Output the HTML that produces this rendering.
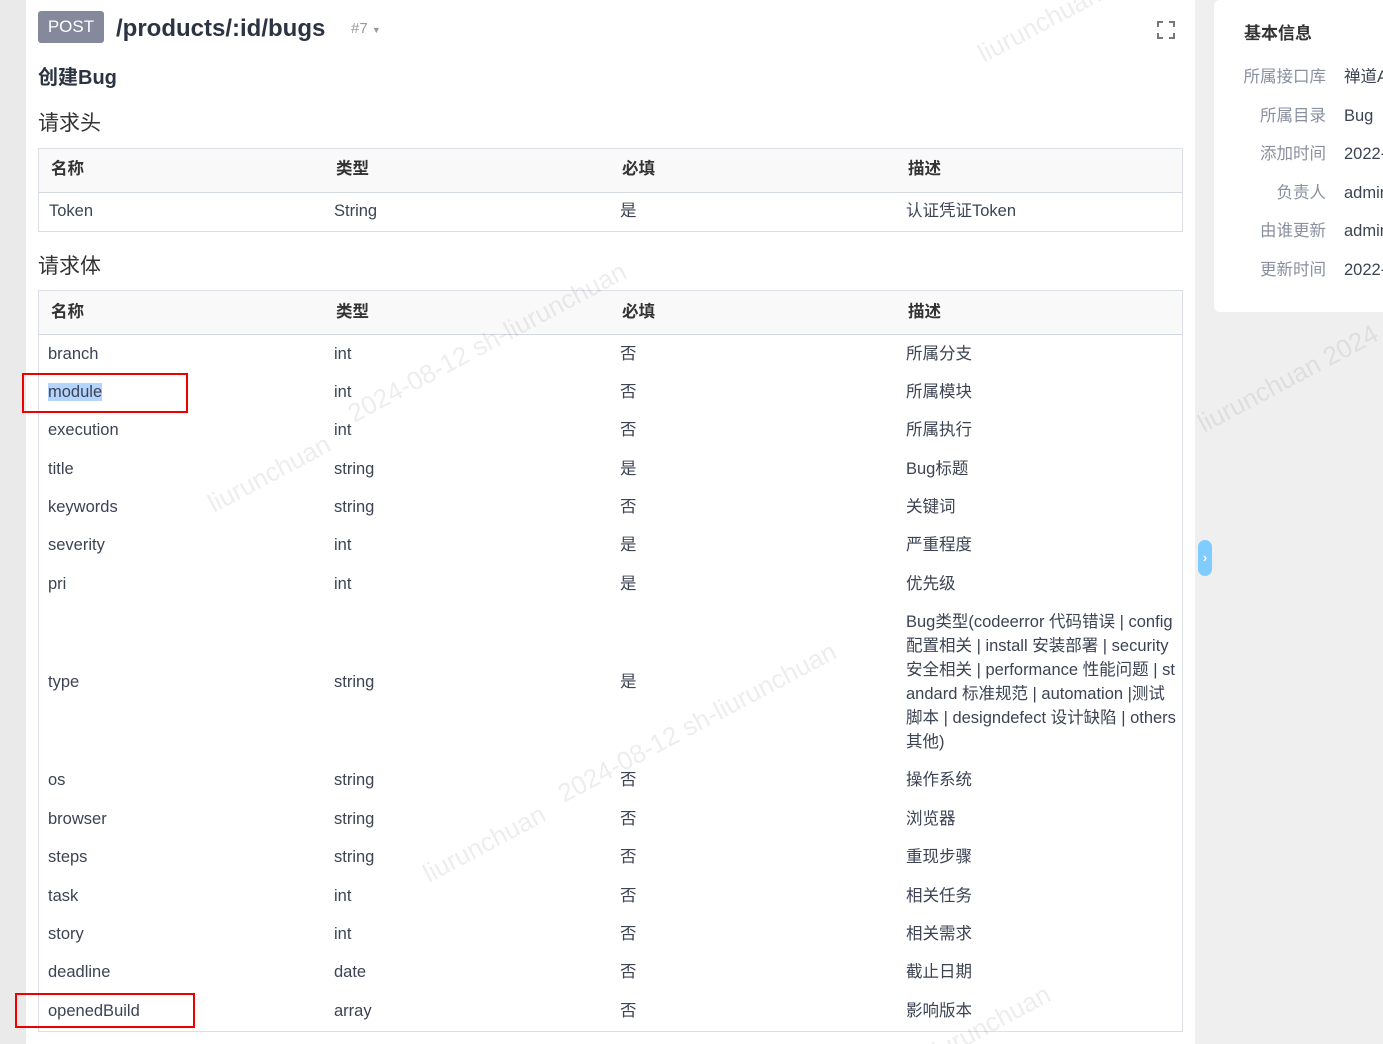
<!DOCTYPE html>
<html><head><meta charset="utf-8"><style>
*{margin:0;padding:0;box-sizing:border-box}
html,body{width:1383px;height:1044px;overflow:hidden}
body{background:#efefef;font-family:"Liberation Sans","Noto Sans CJK SC",sans-serif;color:#3c4353;position:relative}
.strip{position:absolute;left:0;top:0;width:26px;height:1044px;background:#eaeaea}
.card{position:absolute;left:26px;top:0;width:1169px;height:1044px;background:#fff}
.side{position:absolute;left:1214px;top:0;width:180px;height:312px;background:#fff;border-radius:6px}
.a{position:absolute;white-space:nowrap;line-height:20px}
.tbl{position:absolute;left:38px;width:1145px;border:1px solid #dcdfe6}
.hd{height:44px;background:#f9f9f9;border-bottom:1px solid #d3d7e0;position:relative;font-weight:bold;font-size:16.5px;color:#333}
.r{position:relative;font-size:16.5px}
.c{position:absolute;white-space:nowrap;line-height:20px}
.wm{position:absolute;color:rgba(0,0,0,0.07);font-size:26px;transform:rotate(-28deg);white-space:nowrap;transform-origin:left center}
</style></head><body>
<div class="strip"></div>
<div class="card"></div>
<div class="side"></div>

<div class="a" style="left:38px;top:11px;width:66px;height:32px;background:#848a9c;border-radius:3px;color:#fff;font-size:17px;line-height:32px;text-align:center">POST</div>
<div class="a" style="left:116px;top:14px;font-size:24px;line-height:30px;font-weight:bold;color:#2c3342">/products/:id/bugs</div>
<div class="a" style="left:351px;top:19px;font-size:15px;color:#999">#7 <span style="font-size:9px">▼</span></div>
<svg class="a" style="left:1157px;top:21px" width="18" height="18" viewBox="0 0 18 18" fill="none" stroke="#777" stroke-width="2"><path d="M1 6V1h5M12 1h5v5M17 12v5h-5M6 17H1v-5"/></svg>
<div class="a" style="left:38px;top:64px;font-size:20px;line-height:28px;font-weight:bold;color:#2c3342">创建Bug</div>
<div class="a" style="left:38px;top:110px;font-size:21px;line-height:28px;color:#333">请求头</div>

<div class="tbl" style="top:148px">
<div class="hd"><span class="c" style="left:12px;top:10px">名称</span><span class="c" style="left:297px;top:10px">类型</span><span class="c" style="left:583px;top:10px">必填</span><span class="c" style="left:869px;top:10px">描述</span></div>
<div class="r" style="height:38px"><span class="c" style="left:10px;top:8px">Token</span><span class="c" style="left:295px;top:8px">String</span><span class="c" style="left:581px;top:8px">是</span><span class="c" style="left:867px;top:8px">认证凭证Token</span></div>
</div>

<div class="a" style="left:38px;top:253px;font-size:21px;line-height:28px;color:#333">请求体</div>

<div class="tbl" style="top:290px;height:742px">
<div class="hd"><span class="c" style="left:12px;top:11px">名称</span><span class="c" style="left:297px;top:11px">类型</span><span class="c" style="left:583px;top:11px">必填</span><span class="c" style="left:869px;top:11px">描述</span></div>
</div>

<div id="rows"></div>
<script>
var d=[["branch","int","否","所属分支",354],["module","int","否","所属模块",392],["execution","int","否","所属执行",430],["title","string","是","Bug标题",469],["keywords","string","否","关键词",507],["severity","int","是","严重程度",545],["pri","int","是","优先级",584],["type","string","是","",682],["os","string","否","操作系统",780],["browser","string","否","浏览器",819],["steps","string","否","重现步骤",857],["task","int","否","相关任务",896],["story","int","否","相关需求",934],["deadline","date","否","截止日期",972],["openedBuild","array","否","影响版本",1011]];
var h="";d.forEach(function(r){var y=r[4]-10;var n=r[0]=="module"?'<span style="background:#b3d4fc">module</span>':r[0];
var s='font-size:16.5px;top:'+y+'px;';
h+='<div class="a" style="left:48px;'+s+'">'+n+'</div><div class="a" style="left:334px;'+s+'">'+r[1]+'</div><div class="a" style="left:620px;'+s+'">'+r[2]+'</div><div class="a" style="left:906px;'+s+'">'+r[3]+'</div>';});
document.getElementById("rows").innerHTML=h;
</script>
<div class="a" style="left:906px;top:610px;font-size:16.5px;line-height:24px">Bug类型(codeerror 代码错误 | config<br>配置相关 | install 安装部署 | security<br>安全相关 | performance 性能问题 | st<br>andard 标准规范 | automation |测试<br>脚本 | designdefect 设计缺陷 | others<br>其他)</div>

<div class="a" style="left:22px;top:373px;width:166px;height:40px;border:2px solid #e00"></div>
<div class="a" style="left:15px;top:993px;width:180px;height:35px;border:2px solid #e00"></div>

<div class="a" style="left:1244px;top:22px;font-size:17px;line-height:24px;font-weight:bold;color:#333">基本信息</div>
<div class="a" style="left:1214px;top:58px;width:112px;text-align:right;font-size:16.5px;color:#8a90a0;line-height:38.5px">所属接口库<br>所属目录<br>添加时间<br>负责人<br>由谁更新<br>更新时间</div>
<div class="a" style="left:1344px;top:58px;font-size:16.5px;line-height:38.5px">禅道API<br>Bug<br>2022-<br>admin<br>admin<br>2022-</div>

<div class="a" style="left:1198px;top:540px;width:14px;height:36px;background:#80ccff;border-radius:7px;color:#fff;font-size:13px;font-weight:bold;text-align:center;line-height:36px">›</div>

<div class="wm" style="left:980px;top:40px">liurunchuan</div>
<div class="wm" style="left:350px;top:400px">2024-08-12 sh-liurunchuan</div>
<div class="wm" style="left:210px;top:490px">liurunchuan</div>
<div class="wm" style="left:560px;top:780px">2024-08-12 sh-liurunchuan</div>
<div class="wm" style="left:425px;top:860px">liurunchuan</div>
<div class="wm" style="left:1200px;top:410px">liurunchuan 2024</div>
<div class="wm" style="left:930px;top:1040px">liurunchuan</div>
</body></html>
